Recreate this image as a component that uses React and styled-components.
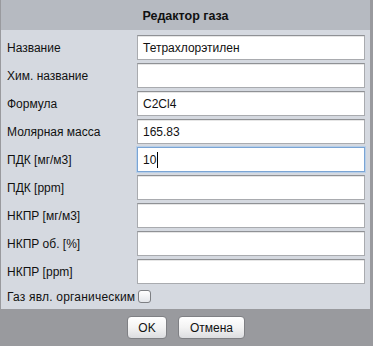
import React from "react";
import styled, { createGlobalStyle } from "styled-components";

const GlobalStyle = createGlobalStyle`
  html, body {
    margin: 0;
    padding: 0;
    background: #999a9e;
  }
  body {
    font-family: "Liberation Sans", Arial, sans-serif;
  }
`;

const fields = [
  { label: "Название", value: "Тетрахлорэтилен" },
  { label: "Хим. название", value: "" },
  { label: "Формула", value: "C2Cl4" },
  { label: "Молярная масса", value: "165.83" },
  { label: "ПДК [мг/м3]", value: "10", focused: true },
  { label: "ПДК [ppm]", value: "" },
  { label: "НКПР [мг/м3]", value: "" },
  { label: "НКПР об. [%]", value: "" },
  { label: "НКПР [ppm]", value: "" },
];

const GasEditor = () => {
  return (
    <>
      <GlobalStyle />
      <Window>
        <TitleBar>Редактор газа</TitleBar>
        <Body>
          {fields.map((f) => (
            <Row key={f.label}>
              <Label>{f.label}</Label>
              <Field focused={f.focused}>
                {f.value}
                {f.focused && <Caret />}
              </Field>
            </Row>
          ))}
          <CheckRow>
            <CheckLabel>Газ явл. органическим</CheckLabel>
            <Check />
          </CheckRow>
        </Body>
        <Footer>
          <Button width={40}>OK</Button>
          <Button width={67}>Отмена</Button>
        </Footer>
      </Window>
    </>
  );
};

const Window = styled.div`
  width: 373px;
  height: 346px;
  box-sizing: border-box;
  background: #999a9e;
  padding: 0 1px;
  display: flex;
  flex-direction: column;
`;

const TitleBar = styled.div`
  height: 30px;
  background: #b6bac1;
  width: 369px;
  display: flex;
  align-items: center;
  justify-content: center;
  font-size: 12.5px;
  font-weight: bold;
  color: #111;
  padding-top: 2px;
  box-sizing: border-box;
`;

const Body = styled.div`
  width: 369px;
  background: #d5d9e0;
  box-sizing: border-box;
  padding: 5px 5px 3px 6px;
  display: flex;
  flex-direction: column;
  gap: 3px;
`;

const Row = styled.div`
  display: flex;
  align-items: center;
  height: 25px;
`;

const Label = styled.div`
  width: 130px;
  font-size: 12px;
  color: #111;
`;

const Field = styled.div`
  flex: 1;
  height: 25px;
  box-sizing: border-box;
  background: #fff;
  border: 1px solid ${(p) => (p.focused ? "#7aa4d4" : "#a9abaf")};
  border-top-color: ${(p) => (p.focused ? "#7aa4d4" : "#8f9195")};
  box-shadow: ${(p) =>
    p.focused ? "0 0 0 1px #b8cfe8" : "inset 0 1px 0 #e6e6e6"};
  font-size: 12px;
  color: #111;
  padding-left: 5px;
  display: flex;
  align-items: center;
`;

const Caret = styled.span`
  display: inline-block;
  width: 1px;
  height: 16px;
  background: #000;
  margin-left: 1px;
`;

const CheckRow = styled.div`
  display: flex;
  align-items: center;
  height: 19px;
`;

const CheckLabel = styled.div`
  min-width: 130px;
  font-size: 12px;
  letter-spacing: 0.2px;
  color: #111;
`;

const Check = styled.div`
  width: 13px;
  height: 13px;
  box-sizing: border-box;
  margin-left: 1px;
  border: 1px solid #7d7f83;
  border-radius: 3px;
  background: linear-gradient(#ffffff, #e4e6ea);
`;

const Footer = styled.div`
  flex: 1;
  display: flex;
  justify-content: center;
  align-items: center;
  gap: 11px;
  padding-right: 1px;
`;

const Button = styled.div`
  width: ${(p) => p.width}px;
  height: 23px;
  box-sizing: border-box;
  border: 1px solid #7f8084;
  border-radius: 4px;
  background: linear-gradient(#ffffff 0%, #f3f3f3 50%, #dcdde0 100%);
  font-size: 12px;
  color: #111;
  display: flex;
  align-items: center;
  justify-content: center;
`;

export default GasEditor;
